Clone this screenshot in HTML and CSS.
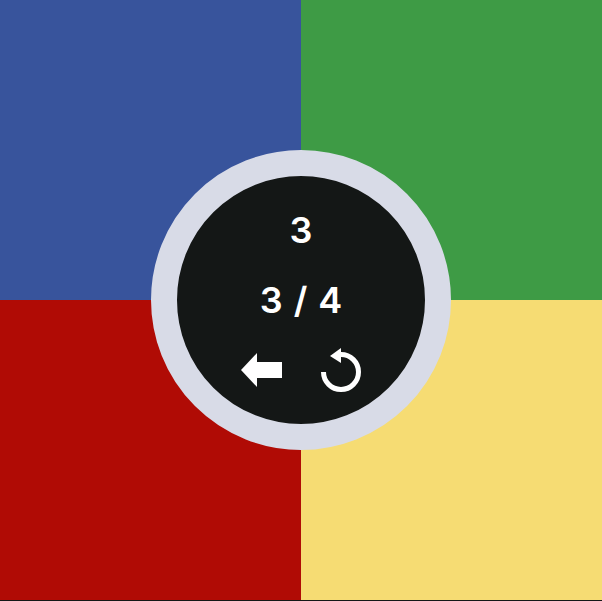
FILE: index.html
```html
<!DOCTYPE html>
<html lang="en">
<head>
  <meta charset="UTF-8" />
  <title>Simon</title>
  <link rel="stylesheet" href="styles.css">
</head>
<body>
  <div class="board">
    <div class="pad blue"></div>
    <div class="pad green"></div>
    <div class="pad red"></div>
    <div class="pad yellow"></div>

    <div class="hub">
      <div class="hub-text">3</div>
      <div class="hub-text">3 / 4</div>
      <div class="hub-buttons">
        <svg class="icon" width="43" height="36" viewBox="0 0 43 36" aria-label="Back">
          <path d="M1 19 L17 2 L17 11 L42 11 L42 27 L17 27 L17 36 Z" fill="#fff" />
        </svg>
        <svg class="icon" width="42" height="48" viewBox="0 0 42 48" aria-label="Restart">
          <path d="M21 9.5 A17.5 17.5 0 1 1 3.5 27" fill="none" stroke="#fff" stroke-width="5" />
          <path d="M10 11 L21 3 L21 18 Z" fill="#fff" />
        </svg>
      </div>
    </div>
  </div>
</body>
</html>
```

FILE: styles.css
```css
body {
  margin: 0;
  background-color: #141716;
  font-family: Inter, "Liberation Sans", sans-serif;
}

.board {
  position: relative;
  display: grid;
  grid-template-columns: 301px 301px;
  grid-template-rows: 300px 300px;
  width: 602px;
  height: 600px;
}

.blue {
  background-color: #38549c;
}

.green {
  background-color: #3e9b45;
}

.red {
  background-color: #b00b05;
}

.yellow {
  background-color: #f6dc73;
}

.hub {
  position: absolute;
  left: 151px;
  top: 150px;
  box-sizing: border-box;
  width: 300px;
  height: 300px;
  padding-top: 45px;
  border: 26px solid #d8dbe7;
  border-radius: 50%;
  background-color: #141716;
  color: white;
  display: flex;
  flex-direction: column;
  align-items: center;
}

.hub-text {
  height: 70px;
  font-size: 36px;
  font-weight: 600;
  line-height: 19px;
  word-spacing: 2px;
}

.hub-buttons {
  display: flex;
  align-items: center;
  gap: 37px;
  margin-top: -16px;
}

.icon {
  overflow: visible;
}
```
